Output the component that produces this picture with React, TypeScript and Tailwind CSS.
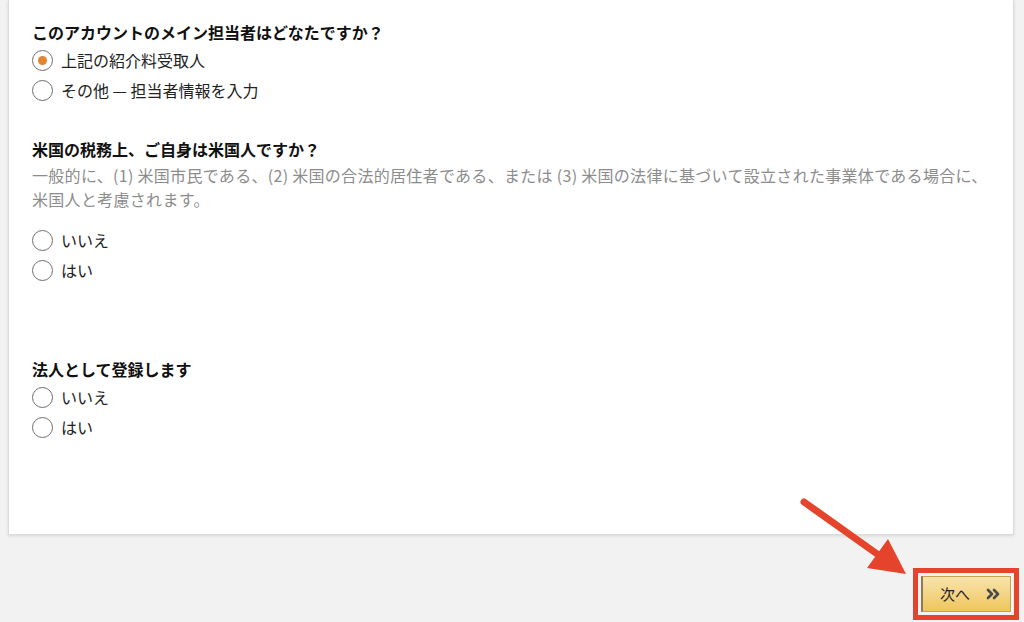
import React from "react";

type Option = { label: string; checked?: boolean };

function Radio({ label, checked }: Option) {
  return (
    <label className="flex h-[30px] items-center gap-[8px]">
      <span className="flex h-[21px] w-[21px] items-center justify-center rounded-full border-[1.5px] border-[#6f6f6f] bg-white">
        {checked && <span className="h-[9px] w-[9px] rounded-full bg-[#e3842f]" />}
      </span>
      <span className="text-[16px] leading-[24px] text-[#222]">{label}</span>
    </label>
  );
}

function Question({ title, note, options }: { title: string; note?: string[]; options: Option[] }) {
  return (
    <div>
      <h3 className="text-[16px] font-bold leading-[24px] text-[#111]">{title}</h3>
      {note && (
        <p className="mt-[2px] mb-[14px] text-[16px] leading-[24px] tracking-[0.3px] whitespace-nowrap text-[#8c8c8c]">
          {note.map((line) => (
            <span key={line} className="block">
              {line}
            </span>
          ))}
        </p>
      )}
      <div className={note ? "" : "mt-[1px]"}>
        {options.map((o) => (
          <Radio key={o.label} {...o} />
        ))}
      </div>
    </div>
  );
}

export default function App() {
  return (
    <div
      className="relative h-[622px] w-[1024px] overflow-hidden bg-[#f2f2f2]"
      style={{ fontFamily: '"Noto Sans CJK JP", "Noto Sans", sans-serif' }}
    >
      {/* Form card */}
      <div className="ml-[8px] h-[535px] w-[1006px] border-r border-b border-l border-[#dcdcdc] bg-white pt-[20px] pl-[23px] shadow-[0_1px_3px_rgba(0,0,0,0.12)]">
        <Question
          title="このアカウントのメイン担当者はどなたですか？"
          options={[{ label: "上記の紹介料受取人", checked: true }, { label: "その他 — 担当者情報を入力" }]}
        />
        <div className="mt-[32px]">
          <Question
            title="米国の税務上、ご自身は米国人ですか？"
            note={[
              "一般的に、(1) 米国市民である、(2) 米国の合法的居住者である、または (3) 米国の法律に基づいて設立された事業体である場合に、",
              "米国人と考慮されます。",
            ]}
            options={[{ label: "いいえ" }, { label: "はい" }]}
          />
        </div>
        <div className="mt-[72px]">
          <Question title="法人として登録します" options={[{ label: "いいえ" }, { label: "はい" }]} />
        </div>
      </div>

      {/* Next button with highlight */}
      <div className="mt-[33px] flex justify-end pr-[5px]">
        <div className="border-[5px] border-[#e5432b] p-[3px]">
          <button className="flex h-[36px] w-[90px] items-center justify-between border border-l-[2px] border-[#c9a24a] border-l-[#8b7a55] bg-gradient-to-b from-[#f8e3ab] to-[#efc65a] pr-[10px] pl-[17px] text-[15px] text-[#222]">
            <span>次へ</span>
            <svg width="14" height="12" viewBox="0 0 14 12" fill="none" stroke="#4a4a4a" strokeWidth="2.6" strokeLinecap="round" strokeLinejoin="round">
              <path d="M2 2l4 4-4 4" />
              <path d="M8 2l4 4-4 4" />
            </svg>
          </button>
        </div>
      </div>

      {/* Annotation arrow */}
      <svg className="pointer-events-none absolute top-0 left-0" width="1024" height="622">
        <line x1="804" y1="502" x2="880" y2="556" stroke="#e5432b" strokeWidth="7" strokeLinecap="round" />
        <polygon points="906,574 867,568 888,539" fill="#e5432b" />
      </svg>
    </div>
  );
}
